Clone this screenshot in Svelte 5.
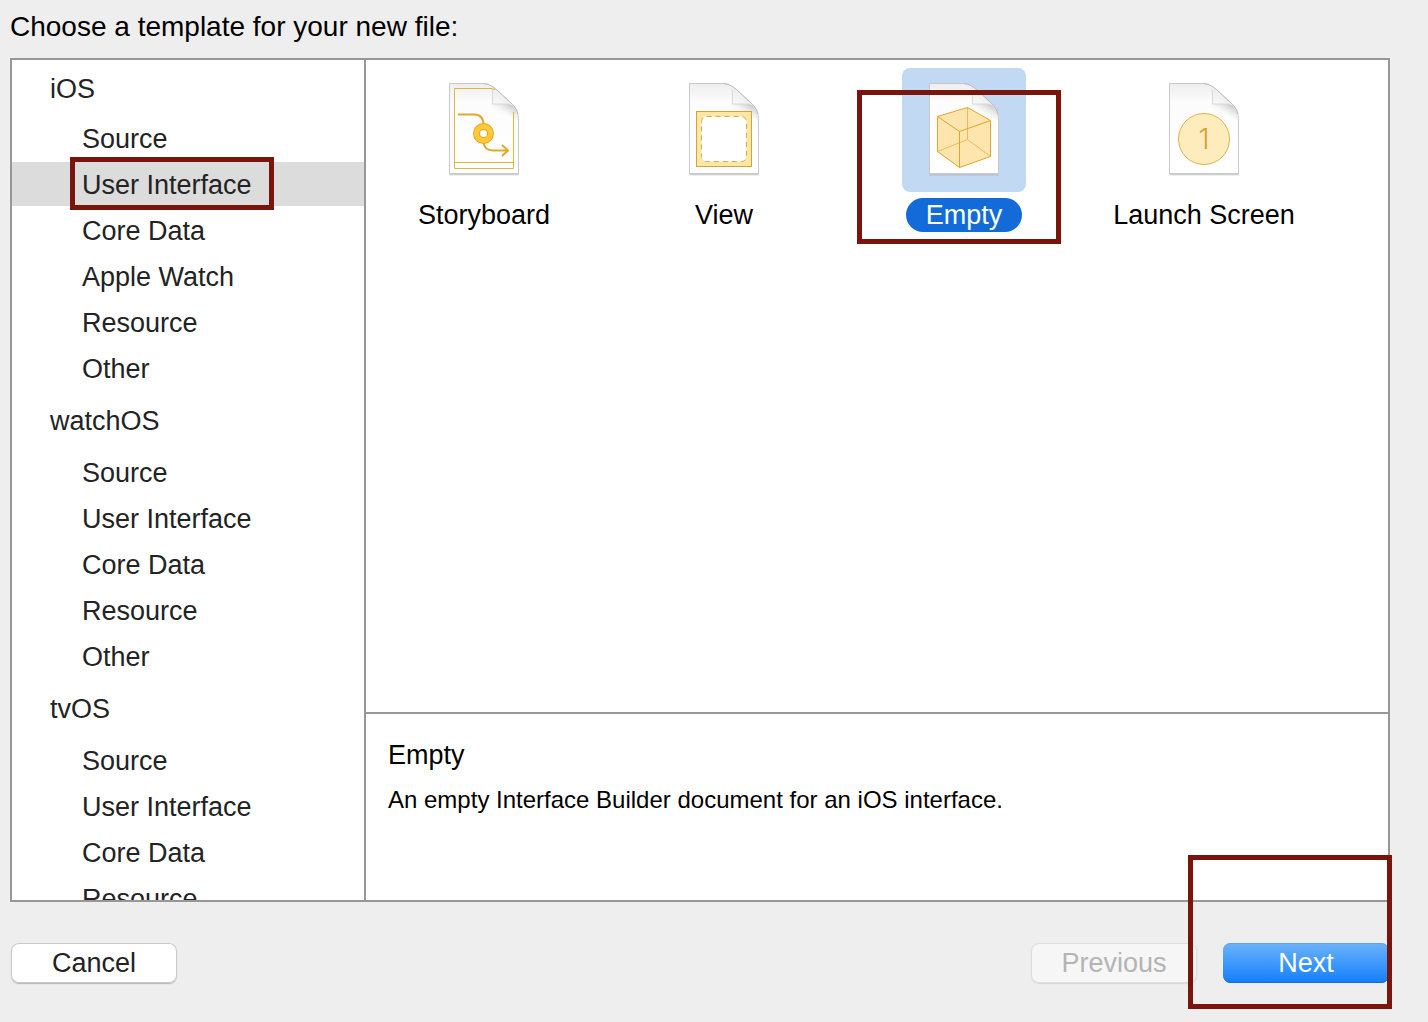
<script>
  const groups = [
    { name: 'iOS', items: ['Source', 'User Interface', 'Core Data', 'Apple Watch', 'Resource', 'Other'] },
    { name: 'watchOS', items: ['Source', 'User Interface', 'Core Data', 'Resource', 'Other'] },
    { name: 'tvOS', items: ['Source', 'User Interface', 'Core Data', 'Resource'] }
  ];
  const templates = [
    { id: 'storyboard', name: 'Storyboard' },
    { id: 'view', name: 'View' },
    { id: 'empty', name: 'Empty' },
    { id: 'launch', name: 'Launch Screen' }
  ];
  let category = $state('iOS/User Interface');
  let template = $state('empty');
</script>

<main class="dialog">
  <h1>Choose a template for your new file:</h1>

  <div class="panes">
    <nav class="sidebar" aria-label="Template categories">
      {#each groups as group}
        <section>
          <h2>{group.name}</h2>
          <ul>
            {#each group.items as item}
              {@const key = group.name + '/' + item}
              <li>
                <button class="category" class:selected={category === key} onclick={() => (category = key)}>
                  <span class="category-name">
                    {item}
                    {#if key === 'iOS/User Interface'}<i class="mark mark-category"></i>{/if}
                  </span>
                </button>
              </li>
            {/each}
          </ul>
        </section>
      {/each}
    </nav>

    <div class="content">
      <div class="templates">
        {#each templates as t}
          <button class="template" class:selected={template === t.id} aria-pressed={template === t.id} onclick={() => (template = t.id)}>
            <span class="tile">
              <svg viewBox="0 0 124 124" aria-hidden="true">
                <defs>
                  <linearGradient id="shade-{t.id}" x1="0" y1="0" x2="0" y2="1">
                    <stop offset="0" stop-color="#eeeeee" />
                    <stop offset="0.2" stop-color="#fcfcfc" />
                    <stop offset="1" stop-color="#ffffff" />
                  </linearGradient>
                  <linearGradient id="fold-{t.id}" x1="0" y1="1" x2="0.5" y2="0.5">
                    <stop offset="0" stop-color="#ffffff" />
                    <stop offset="1" stop-color="#f0f0f0" />
                  </linearGradient>
                  <linearGradient id="cast-{t.id}" gradientUnits="userSpaceOnUse" x1="83" y1="30" x2="74" y2="45">
                    <stop offset="0" stop-color="#b4b4b4" />
                    <stop offset="1" stop-color="#ffffff" stop-opacity="0" />
                  </linearGradient>
                </defs>
                <path d="M27 107.500H97" stroke="#000" stroke-opacity=".06" />
                <path d="M27.500 15.500H60C66 15.500 70 18 75 22L90 36C95 41 96.500 46 96.500 53V106H27.500Z" fill="url(#shade-{t.id})" stroke="#c9c9cd" />
                <path d="M70 36H87L90 37C94 41 96 46 96 52L62 40Z" fill="url(#cast-{t.id})" />
                <path d="M61 16C67 16 71 20 70.500 36C78 35.500 84 35.500 89 36L75 22C70 18 66 16 61 16Z" fill="url(#fold-{t.id})" />
                <path d="M70.500 22V36H87" fill="none" stroke="#d8d8da" />
                <path d="M62 15.500C67 16 70 18 75 22L90 36C93 39 95 42 96 46" fill="none" stroke="#bdbdc0" />
                <path d="M27.500 106H96.500" stroke="#b4b4b7" />
                {#if t.id === 'storyboard'}
                  <path d="M73 21.500L69 20.500H32.500V100.500H91.500V44M32.500 94.500H91.500" fill="none" stroke="#dfb53f" />
                  <path d="M36 46.500H52C59 46.500 61.500 50 61.500 57M61.500 74C62 80 66 82.500 71 82.500H85M80 77L86 82.500L80 88" fill="none" stroke="#e0a92b" stroke-width="2" />
                  <circle cx="61.500" cy="65.500" r="7" fill="#fff" stroke="#e9a522" stroke-width="7" />
                  <circle cx="61.500" cy="65.500" r="7" fill="none" stroke="#ffc937" stroke-width="5" />
                {:else if t.id === 'view'}
                  <rect x="34.500" y="43.500" width="55" height="55" fill="#ffe6a3" stroke="#cfa43c" />
                  <rect x="39.500" y="48.500" width="45" height="45" rx="5" fill="#fff" stroke="#cda95a" stroke-dasharray="5 4" />
                {:else if t.id === 'empty'}
                  <path d="M65.500 39.500L88.500 52.500V88.500L57.500 99.500L35.500 83.500V48.500Z" fill="#fee5ae" />
                  <path d="M35.500 83.500L65.500 71.500L88.500 88.500M65.500 71.500V39.500" fill="none" stroke="#e6bd5c" />
                  <path d="M65.500 39.500L88.500 52.500V88.500L57.500 99.500L35.500 83.500V48.500ZM35.500 48.500L57.500 63.500L88.500 52.500M57.500 63.500V99.500" fill="none" stroke="#dfa52f" stroke-linejoin="round" />
                {:else}
                  <circle cx="62" cy="71" r="25.500" fill="#ffecbd" stroke="#e2b249" />
                  <text class="numeral" x="62" y="81" text-anchor="middle">1</text>
                {/if}
              </svg>
            </span>
            <span class="template-name">{t.name}</span>
            {#if t.id === 'empty'}<i class="mark mark-template"></i>{/if}
          </button>
        {/each}
      </div>

      <section class="detail">
        <h2>Empty</h2>
        <p>An empty Interface Builder document for an iOS interface.</p>
      </section>
    </div>
  </div>

  <footer>
    <button class="action">Cancel</button>
    <div class="steps">
      <button class="action" disabled>Previous</button>
      <button class="action primary">Next<i class="mark mark-next"></i></button>
    </div>
  </footer>
</main>

<style>
  :global(body) {
    margin: 0;
    background: #eeeeee;
  }

  .dialog {
    box-sizing: border-box;
    height: 100vh;
    min-height: 480px;
    padding: 0 38px 0 10px;
    display: flex;
    flex-direction: column;
    overflow: hidden;
    font-family: 'Helvetica Neue', 'Liberation Sans', Arial, sans-serif;
    font-size: 27px;
    line-height: 34px;
    color: #000;
  }

  h1,
  h2,
  p,
  ul {
    margin: 0;
    padding: 0;
    font-size: inherit;
    font-weight: 400;
    list-style: none;
  }

  h1 {
    padding: 10px 0 14px;
    font-size: 28px;
  }

  button {
    font: inherit;
    color: inherit;
    border: 0;
    padding: 0;
    background: none;
  }

  .panes {
    flex: 1;
    min-height: 0;
    display: flex;
    background: #fff;
    border: 2px solid #979797;
  }

  .sidebar {
    flex: 0 0 352px;
    display: flex;
    flex-direction: column;
    gap: 2px;
    border-right: 2px solid #979797;
    overflow-y: auto;
    scrollbar-width: none;
    color: #232323;
  }

  .sidebar section {
    flex: none;
  }

  .sidebar h2 {
    padding: 12px 0 10px 38px;
  }

  .sidebar section + section h2 {
    padding-bottom: 12px;
  }

  .sidebar ul {
    display: flex;
    flex-direction: column;
    gap: 2px;
  }

  .category {
    display: block;
    width: 100%;
    padding: 6px 0 4px 70px;
    text-align: left;
  }

  .category.selected {
    background: #dcdcdc;
  }

  .category-name {
    position: relative;
    display: inline-block;
    vertical-align: top;
  }

  .content {
    flex: 1;
    min-width: 0;
    display: flex;
    flex-direction: column;
  }

  .templates {
    flex: 1;
    display: grid;
    grid-template-columns: repeat(auto-fill, 236px);
    align-content: start;
    gap: 4px;
    padding-top: 8px;
  }

  .template {
    position: relative;
    display: flex;
    flex-direction: column;
    align-items: center;
    gap: 6px;
  }

  .tile {
    width: 124px;
    height: 124px;
    border-radius: 8px;
  }

  .tile svg {
    display: block;
  }

  .numeral {
    font-family: Inter, 'Noto Sans', sans-serif;
    font-size: 28px;
    font-weight: 300;
    fill: #d3a136;
  }

  .template-name {
    padding: 0 20px;
    border-radius: 17px;
  }

  .template.selected .tile {
    background: #c1d9f3;
  }

  .template.selected .template-name {
    background: #126bd8;
    color: #fff;
  }

  .detail {
    min-height: 162px;
    padding: 24px 22px 0;
    border-top: 2px solid #979797;
  }

  .detail p {
    margin-top: 12px;
    font-size: 24px;
    line-height: 32px;
  }

  footer {
    display: flex;
    justify-content: space-between;
    padding: 41px 1px 39px;
  }

  .steps {
    display: flex;
    gap: 26px;
  }

  .action {
    position: relative;
    width: 166px;
    height: 40px;
    border-radius: 8px;
    background: #fff;
    box-shadow: inset 0 0 0 1px #cacaca, 0 1px 1px #b5b5b5;
    color: #232323;
  }

  .action:disabled {
    background: #f6f6f6;
    box-shadow: inset 0 0 0 1px #dddddd, 0 1px 1px #d8d8d8;
    color: #b4b4b4;
  }

  .action.primary {
    background: linear-gradient(#6bb3fa, #147efd);
    box-shadow: inset 0 1px 0 #5ba5ee, inset 0 -1px 0 #1068dc;
    color: #fff;
  }

  .mark {
    position: absolute;
    box-sizing: border-box;
    border: 5px solid #79150c;
    pointer-events: none;
  }

  .mark-category {
    inset: -11px -22px -8px -12px;
  }

  .mark-template {
    inset: 22px 21px -12px 11px;
  }

  .mark-next {
    inset: -88px -3px -26px -35px;
  }
</style>
